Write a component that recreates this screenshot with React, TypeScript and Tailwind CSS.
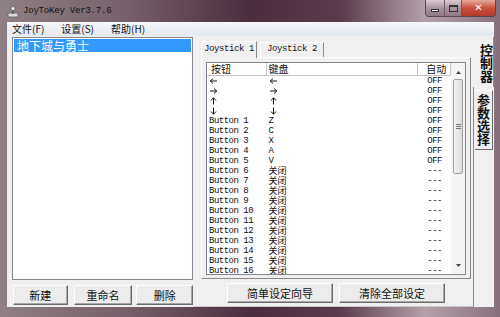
import React from "react";

const mono = "font-['Liberation_Mono',monospace]";
const cjk = "font-['Noto_Sans_CJK_SC',sans-serif]";

const rows: [string, string, string][] = [
  ["←", "←", "OFF"],
  ["→", "→", "OFF"],
  ["↑", "↑", "OFF"],
  ["↓", "↓", "OFF"],
  ["Button 1", "Z", "OFF"],
  ["Button 2", "C", "OFF"],
  ["Button 3", "X", "OFF"],
  ["Button 4", "A", "OFF"],
  ["Button 5", "V", "OFF"],
  ...Array.from({ length: 11 }, (_, i) => [`Button ${i + 6}`, "关闭", "---"] as [string, string, string]),
];

const arrowRot: Record<string, number> = { "→": 0, "↓": 90, "←": 180, "↑": 270 };

function Arrow({ dir }: { dir: string }) {
  return (
    <svg width="9" height="10" viewBox="0 0 9 10" style={{ transform: `rotate(${arrowRot[dir]}deg)` }}>
      <path d="M1 5 H7.5 M5 2.5 L7.8 5 L5 7.5" stroke="#111" strokeWidth="1" fill="none" />
    </svg>
  );
}

function Btn({ label, className }: { label: string; className: string }) {
  return (
    <button
      className={`${className} ${cjk} flex h-[20px] items-center justify-center border border-t-white border-l-white border-r-[#6b6b6b] border-b-[#6b6b6b] bg-[#ececec] text-[11px] leading-none text-[#111] shadow-[inset_-1px_-1px_0_#a8a8a8]`}
    >
      {label}
    </button>
  );
}

function Cell({ text, className }: { text: string; className: string }) {
  if (text in arrowRot) {
    return (
      <div className={`${className} flex h-[10px] items-center`}>
        <Arrow dir={text} />
      </div>
    );
  }
  const isCjk = /[\u4e00-\u9fff]/.test(text);
  const font = isCjk ? `${cjk} text-[9px]` : `${mono} text-[9px] tracking-[-0.5px]`;
  return <div className={`${className} ${font} whitespace-nowrap leading-[10px]`}>{text}</div>;
}

export default function App() {
  return (
    <div className="flex h-[317px] w-[500px] flex-col overflow-hidden bg-[linear-gradient(90deg,#8e8084_0%,#76616a_25%,#4a2e3e_50%,#5a3c4c_68%,#b3a2aa_85%,#86707c_100%)]">
      {/* title bar */}
      <div className="flex h-[22px] shrink-0 items-start">
        <div className="flex items-center pl-[7px] pt-[5px]">
          <svg width="12" height="12" viewBox="0 0 12 12">
            <rect x="1" y="7" width="10" height="4" rx="1" fill="#d8d8d8" stroke="#555" strokeWidth="0.7" />
            <rect x="5" y="2" width="2" height="6" fill="#666" />
            <circle cx="6" cy="2.5" r="2" fill="#eee" stroke="#444" strokeWidth="0.6" />
          </svg>
          <span className={`${mono} ml-[4px] text-[9px] tracking-[-0.2px] text-[#111]`}>JoyToKey Ver3.7.6</span>
        </div>
        <div className="ml-auto mr-[4px] flex h-[17px] overflow-hidden rounded-b-[4px] border border-t-0 border-[#5b4552]">
          <div className="flex w-[19px] items-center justify-center border-r border-[#6e5a66] bg-[linear-gradient(180deg,#d8ccd2,#a8949e_50%,#8e7a86)]">
            <div className="mt-[5px] h-[3px] w-[8px] border border-[#333] bg-white" />
          </div>
          <div className="flex w-[17px] items-center justify-center border-r border-[#6e5a66] bg-[linear-gradient(180deg,#d8ccd2,#a8949e_50%,#8e7a86)]">
            <div className="h-[7px] w-[9px] border border-[#333] border-t-2 bg-transparent" />
          </div>
          <div className="flex w-[33px] items-center justify-center bg-[linear-gradient(180deg,#e8a898,#c9503d_50%,#b23a28)]">
            <span className="font-['DejaVu_Sans',sans-serif] text-[10px] font-bold leading-none text-white">✕</span>
          </div>
        </div>
      </div>

      <div className="mx-[7px] mr-[6px] mb-[10px] flex flex-1 flex-col">
        {/* menu */}
        <div className={`${cjk} flex h-[14px] shrink-0 items-center gap-[17px] bg-[linear-gradient(180deg,#f7f8fa,#e2e8f1)] pl-[5px] text-[10px] leading-none text-[#111]`}>
          <span>文件(F)</span>
          <span>设置(S)</span>
          <span>帮助(H)</span>
        </div>

        {/* client */}
        <div className="flex flex-1 bg-[#f0f0f0]">
          {/* left */}
          <div className="flex w-[186px] shrink-0 flex-col pl-[5px] pt-[1px]">
            <div className="h-[243px] border border-[#828790] bg-white p-[1px]">
              <div className={`${cjk} flex h-[13px] items-center bg-[#3399ff] pl-[3px] text-[12px] leading-none text-white`}>
                地下城与勇士
              </div>
            </div>
            <div className="mt-[5px] flex">
              <Btn label="新建" className="ml-[1px] w-[55px]" />
              <Btn label="重命名" className="ml-[6px] w-[59px]" />
              <Btn label="删除" className="ml-[4px] w-[57px]" />
            </div>
          </div>

          {/* right panel area */}
          <div className="flex flex-1 flex-col border-b border-[#c8c8c8] pl-[8px]">
            {/* tabs */}
            <div className="mt-[5px] flex h-[16px] items-end">
              <div className={`${mono} relative z-10 -mb-[1px] flex h-[17px] w-[56px] items-center justify-center border border-b-0 border-t-white border-l-white border-r-[#8a8a8a] bg-[#f0f0f0] text-[9px] tracking-[-0.4px] text-[#111]`}>
                Joystick 1
              </div>
              <div className={`${mono} ml-[3px] flex h-[15px] w-[64px] items-center justify-center border border-b-0 border-t-white border-l-white border-r-[#8a8a8a] text-[9px] tracking-[-0.4px] text-[#111]`}>
                Joystick 2
              </div>
            </div>
            <div className="h-[222px] w-[270px] border border-t-white border-l-white border-r-[#8a8a8a] border-b-[#8a8a8a] p-[4px]">
              {/* list view */}
              <div className="flex h-[213px] border border-[#828790] bg-white">
                <div className="flex flex-1 flex-col overflow-hidden">
                  <div className={`${cjk} flex h-[13px] shrink-0 items-center border-b border-[#c5c5c5] text-[10px] leading-[12px] text-[#111]`}>
                    <div className="h-full w-[60px] border-r border-[#c5c5c5] pl-[4px]">按钮</div>
                    <div className="h-full w-[153px] border-r border-[#c5c5c5] pl-[2px]">键盘</div>
                    <div className="h-full w-[33px] border-r border-[#c5c5c5] pl-[8px]">自动</div>
                  </div>
                  <div className="flex flex-col text-[#111]">
                    {rows.map((r, i) => (
                      <div key={i} className="flex h-[10px] shrink-0">
                        <Cell text={r[0]} className="w-[60px] pl-[2px]" />
                        <Cell text={r[1]} className="w-[153px] pl-[2px]" />
                        <Cell text={r[2]} className="w-[33px] text-center" />
                      </div>
                    ))}
                  </div>
                </div>
                {/* scrollbar */}
                <div className="flex w-[14px] shrink-0 flex-col items-center bg-[#f4f4f4] pt-[2px]">
                  <svg width="7" height="6" viewBox="0 0 7 6" className="mt-[4px]">
                    <path d="M1 5 L3.5 2 L6 5Z" fill="#444" />
                  </svg>
                  <div className="mt-[4px] flex h-[95px] w-[10px] items-center justify-center rounded-[2px] border border-[#a0a0a0] bg-[linear-gradient(90deg,#f3f3f3,#dcdcdc)]">
                    <div className="flex flex-col gap-[1px]">
                      <div className="h-px w-[5px] bg-[#777]" />
                      <div className="h-px w-[5px] bg-[#777]" />
                      <div className="h-px w-[5px] bg-[#777]" />
                    </div>
                  </div>
                  <svg width="7" height="6" viewBox="0 0 7 6" className="mt-auto mb-[5px]">
                    <path d="M1 1 L3.5 4 L6 1Z" fill="#444" />
                  </svg>
                </div>
              </div>
            </div>
            {/* bottom buttons */}
            <div className="mt-[4px] flex">
              <Btn label="简单设定向导" className="ml-[26px] w-[106px]" />
              <Btn label="清除全部设定" className="ml-[6px] w-[106px]" />
            </div>
          </div>

          {/* vertical tabs */}
          <div className="flex w-[21px] shrink-0 flex-col">
            <div className={`${cjk} mt-[1px] flex h-[50px] items-start justify-center border-r border-[#8a8a8a] pt-[3px] text-[13px] font-bold leading-[13px] text-[#111] [writing-mode:vertical-rl]`}>
              控制器
            </div>
            <div className="flex flex-1 flex-col border-l border-[#8a8a8a]">
              <div className={`${cjk} mt-[3px] ml-[1px] flex h-[60px] w-[18px] items-center justify-center border border-l-0 border-t-white border-r-[#6b6b6b] border-b-[#6b6b6b] text-[13px] font-bold leading-[13px] text-[#111] [writing-mode:vertical-rl]`}>
                参数选择
              </div>
            </div>
          </div>
        </div>
      </div>
    </div>
  );
}
